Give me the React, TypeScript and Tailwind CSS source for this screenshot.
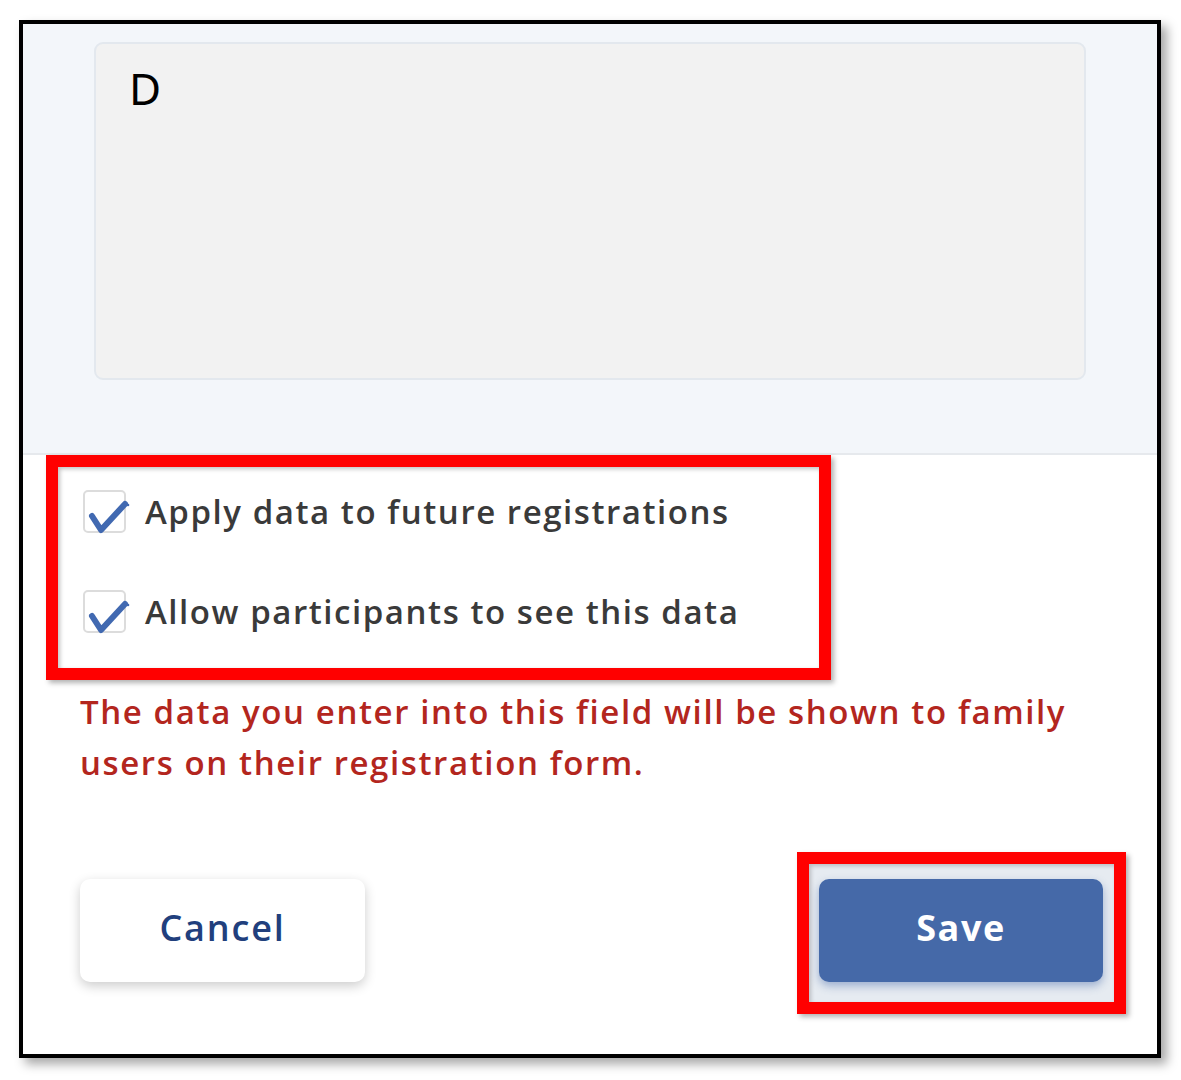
import React from "react";

function Check() {
  return (
    <div className="relative w-[43px] h-[43px] shrink-0 rounded-[5px] border-2 border-[#dcdcdc] bg-white">
      <svg className="absolute left-[-2px] top-[-2px] overflow-visible" width="47" height="47" viewBox="0 0 47 47">
        <path d="M9 26 L18 40 L42 14" fill="none" stroke="#4169b1" strokeWidth="6" strokeLinecap="round" strokeLinejoin="round" />
        <circle cx="45" cy="15" r="1.3" fill="#4169b1" />
      </svg>
    </div>
  );
}

export default function App() {
  return (
    <div className="w-[1181px] h-[1080px] bg-white pl-[19px] pt-[20px]" style={{ fontFamily: "'Open Sans', Lato, sans-serif" }}>
      <div className="w-[1142px] h-[1038px] border-4 border-black bg-white flex flex-col shadow-[6px_6px_10px_rgba(0,0,0,0.35)]">
        {/* top section */}
        <div className="h-[431px] bg-[#f3f6fa] border-b-2 border-[#e6e9ed] pl-[71px] pt-[18px] shrink-0">
          <div className="w-[992px] h-[338px] bg-[#f2f2f2] border-2 border-[#e3e8ee] rounded-[9px] pl-[33px] pt-[16px]">
            <span className="text-[44px] leading-[56px] text-black" style={{ fontFamily: "'Noto Sans', 'DejaVu Sans', sans-serif" }}>D</span>
          </div>
        </div>
        {/* bottom section */}
        <div className="flex flex-col">
          <div className="ml-[23px] w-[785px] h-[225px] border-[12px] border-[#ff0000] shadow-[3px_3px_5px_rgba(0,0,0,0.3)]">
            <div className="w-full h-full shadow-[inset_2px_2px_4px_rgba(0,0,0,0.25)] pl-[25px] pt-[23px] flex flex-col gap-[57px]">
              <div className="flex items-center gap-[19px]">
                <Check />
                <span className="text-[33px] font-semibold text-[#3a3a3a] leading-none tracking-[1.55px]">Apply data to future registrations</span>
              </div>
              <div className="flex items-center gap-[19px]">
                <Check />
                <span className="text-[33px] font-semibold text-[#3a3a3a] leading-none tracking-[1.55px]">Allow participants to see this data</span>
              </div>
            </div>
          </div>
          <p className="mt-[6px] ml-[57px] w-[1040px] text-[33px] leading-[51px] font-semibold text-[#b3261e] tracking-[1.6px]">
            The data you enter into this field will be shown to family users on their registration form.
          </p>
          <div className="mt-[64px] flex items-start justify-between pl-[57px] pr-[31px]">
            <button className="mt-[27px] w-[285px] h-[103px] rounded-[10px] bg-white shadow-[0_4px_12px_rgba(0,0,0,0.2)] text-[36px] leading-none pb-[6px] font-semibold tracking-[1.8px] text-[#213f7d]">
              Cancel
            </button>
            <div className="w-[329px] h-[162px] border-[12px] border-[#ff0000] shadow-[3px_3px_5px_rgba(0,0,0,0.3)]">
              <div className="w-full h-full bg-[#e6ebf1] shadow-[inset_2px_2px_4px_rgba(0,0,0,0.2)] pl-[10px] pt-[15px]">
                <button className="w-[284px] h-[103px] rounded-[10px] bg-[#4569a8] shadow-[0_4px_8px_rgba(69,105,168,0.45)] text-[36px] leading-none pb-[6px] font-bold tracking-[1.6px] text-white">
                  Save
                </button>
              </div>
            </div>
          </div>
        </div>
      </div>
    </div>
  );
}
